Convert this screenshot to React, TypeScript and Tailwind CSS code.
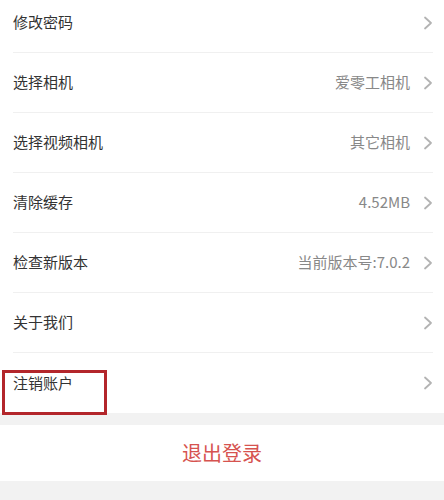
import React from 'react'

const rows: { label: string; value?: string }[] = [
  { label: '修改密码' },
  { label: '选择相机', value: '爱零工相机' },
  { label: '选择视频相机', value: '其它相机' },
  { label: '清除缓存', value: '4.52MB' },
  { label: '检查新版本', value: '当前版本号:7.0.2' },
  { label: '关于我们' },
  { label: '注销账户' },
]

function Chevron() {
  return (
    <svg width="10" height="14" viewBox="0 0 10 14" className="shrink-0">
      <polyline points="2,1.5 8,7 2,12.5" fill="none" stroke="#b3b3b3" strokeWidth="1.8" strokeLinecap="round" strokeLinejoin="round" />
    </svg>
  )
}

export default function App() {
  return (
    <div
      className="relative w-[444px] h-[500px] overflow-hidden bg-[#f2f2f2]"
      style={{ fontFamily: '"Noto Sans CJK SC", "Noto Sans", sans-serif' }}
    >
      <div className="bg-white -mt-[7px]">
        {rows.map((row, i) => (
          <div key={row.label} className="h-[60px] pl-[13px] pr-[11px]">
            <div
              className={
                'h-full flex items-center justify-between ' +
                (i < rows.length - 1 ? 'border-b border-[#f0f0f0]' : '')
              }
            >
              <span className="text-[15px] text-[#333]">{row.label}</span>
              <div className="flex items-center gap-[13px]">
                {row.value && <span className="text-[15px] text-[#888]">{row.value}</span>}
                <Chevron />
              </div>
            </div>
          </div>
        ))}
      </div>

      <div className="h-[12px]" />

      <div className="h-[56px] bg-white flex items-center justify-center">
        <span className="text-[20px] text-[#d6534f]">退出登录</span>
      </div>

      {/* annotation box */}
      <div className="absolute left-[2px] top-[370px] w-[105px] h-[45px] border-[3px] border-[#b3262b]" />
    </div>
  )
}
